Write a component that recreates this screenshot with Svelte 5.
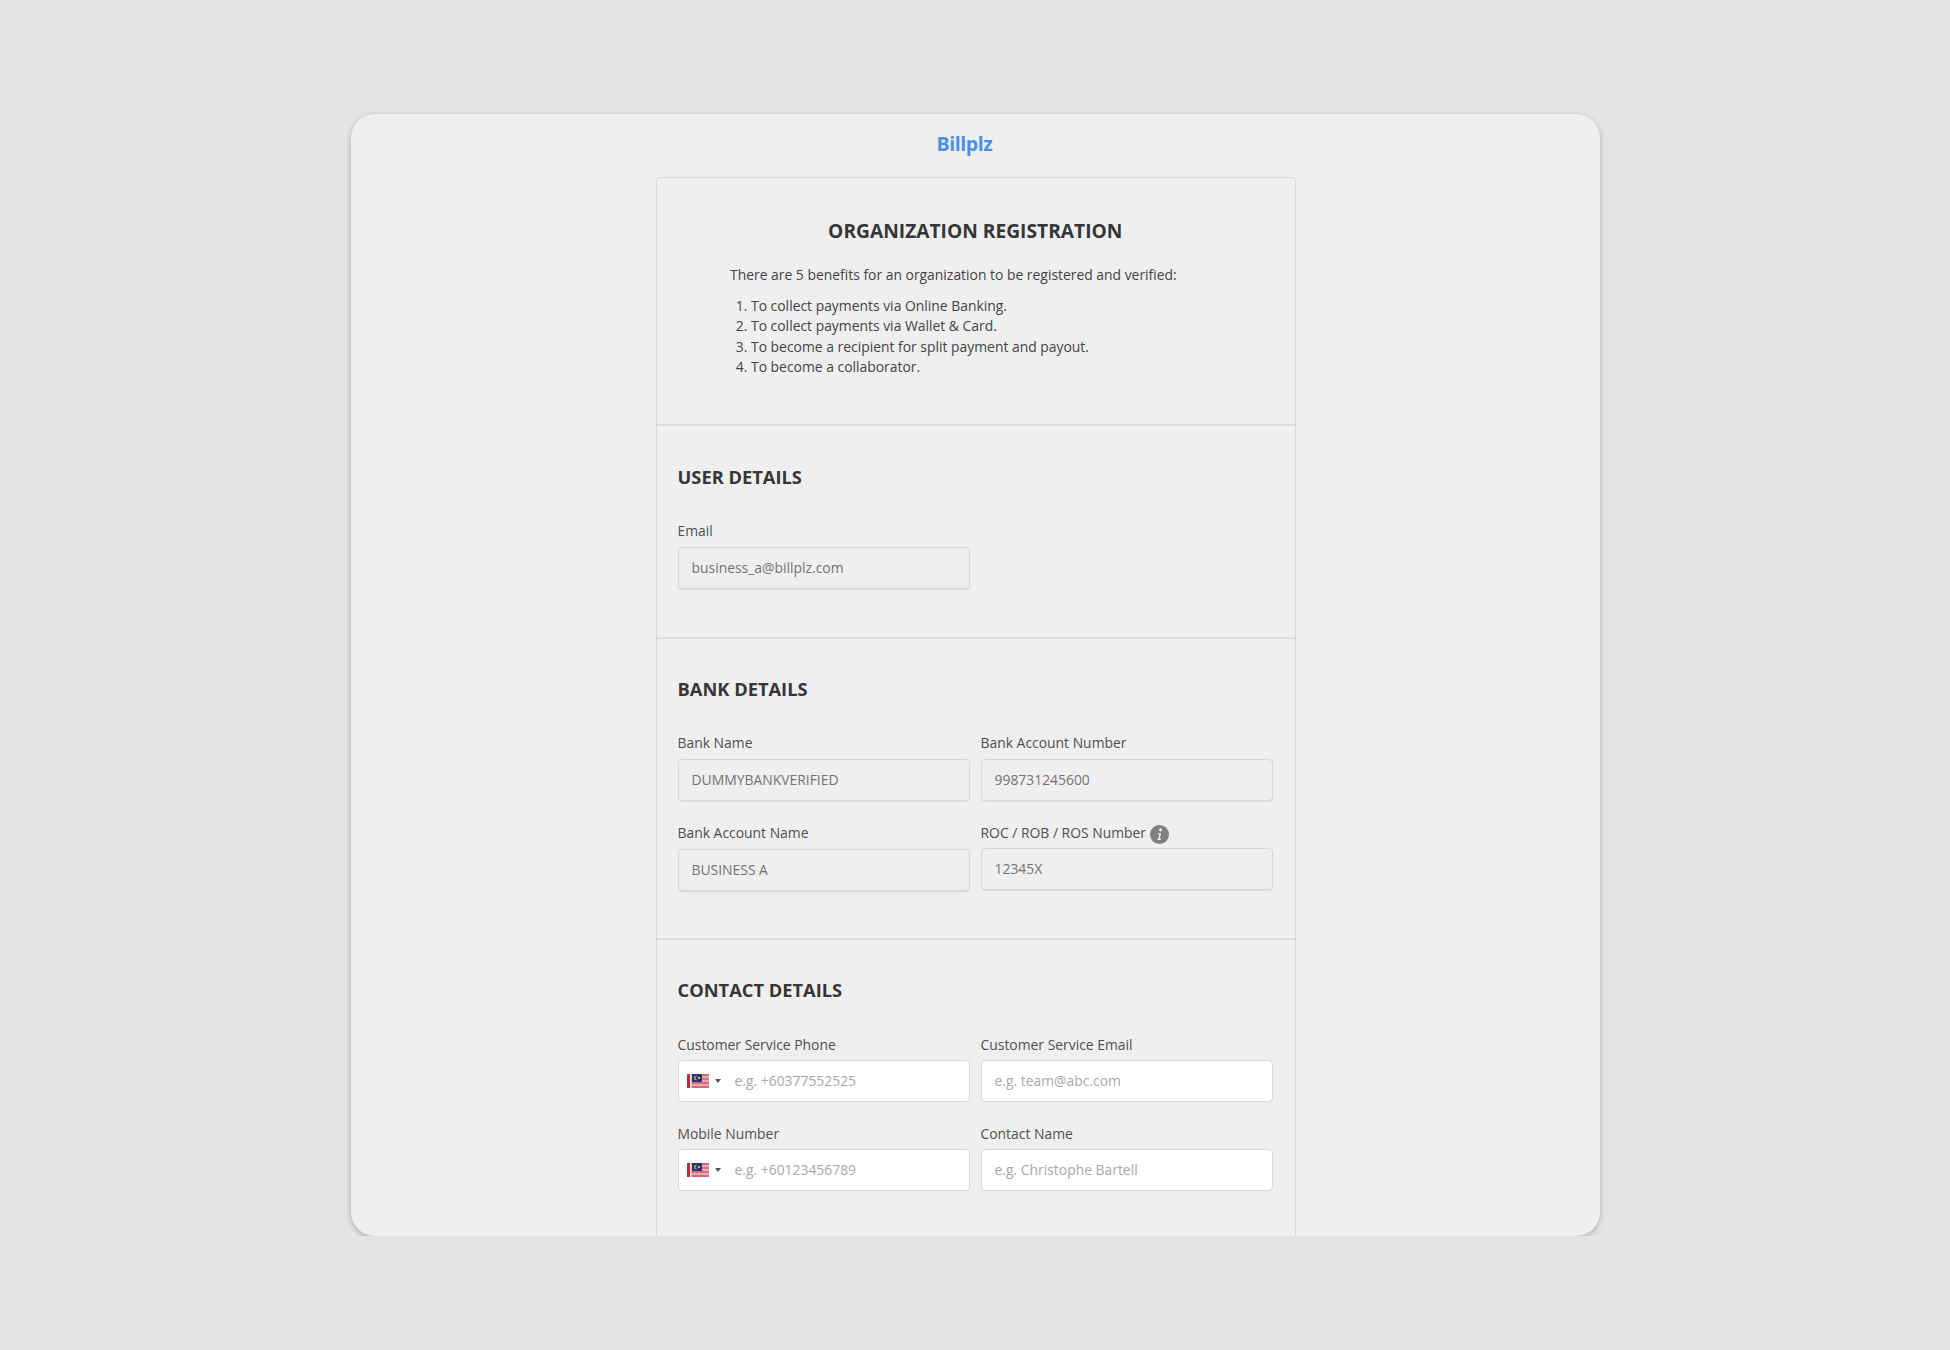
<script>
    const benefits = [
        "To collect payments via Online Banking.",
        "To collect payments via Wallet & Card.",
        "To become a recipient for split payment and payout.",
        "To become a collaborator."
    ]
</script>

{#snippet flag()}
    <svg class="flag" viewBox="0 0 22 14" aria-hidden="true">
        <rect width="22" height="14" fill="#e9a9b6" />
        <rect y="0" width="22" height="2" fill="#d9687f" />
        <rect y="4" width="22" height="2" fill="#dc7389" />
        <rect y="8" width="22" height="2" fill="#d9687f" />
        <rect y="12" width="22" height="2" fill="#d9687f" />
        <rect width="3" height="14" fill="#c8283f" />
        <rect x="3" width="1.5" height="14" fill="#f3e4e6" />
        <rect x="5" y="0" width="10" height="8" fill="#2d3570" />
        <circle cx="9.4" cy="4" r="2.2" fill="#e6cb6a" />
        <circle cx="10.2" cy="4" r="1.9" fill="#2d3570" />
        <circle cx="12" cy="4" r="1.1" fill="#e6cb6a" />
    </svg>
    <span class="caret"></span>
{/snippet}

<div class="window">
    <header class="logo">Billplz</header>

    <main class="card">
        <section class="intro">
            <h1>ORGANIZATION REGISTRATION</h1>
            <p>There are 5 benefits for an organization to be registered and verified:</p>
            <ol>
                {#each benefits as item}
                    <li>{item}</li>
                {/each}
            </ol>
        </section>

        <section class="user">
            <h2>USER DETAILS</h2>
            <div class="grid">
                <label class="field">
                    <span class="label">Email</span>
                    <input class="input" disabled value="business_a@billplz.com" />
                </label>
            </div>
        </section>

        <section class="bank">
            <h2>BANK DETAILS</h2>
            <div class="grid">
                <label class="field">
                    <span class="label">Bank Name</span>
                    <input class="input" disabled value="DUMMYBANKVERIFIED" />
                </label>
                <label class="field">
                    <span class="label">Bank Account Number</span>
                    <input class="input" disabled value="998731245600" />
                </label>
                <label class="field">
                    <span class="label">Bank Account Name</span>
                    <input class="input" disabled value="BUSINESS A" />
                </label>
                <label class="field">
                    <span class="label with-info">
                        ROC / ROB / ROS Number
                        <svg class="info" viewBox="0 0 18 18" aria-hidden="true">
                            <circle cx="9" cy="9" r="9" fill="#808080" />
                            <circle cx="10" cy="4.6" r="1.5" fill="#efefef" />
                            <path d="M7.2 7.7h3.3l-1.2 5.2h1.1l-.3 1.2H6.9l.3-1.2h.8l.9-4h-1z" fill="#efefef" />
                        </svg>
                    </span>
                    <input class="input" disabled value="12345X" />
                </label>
            </div>
        </section>

        <section class="contact">
            <h2>CONTACT DETAILS</h2>
            <div class="grid">
                <div class="field">
                    <span class="label">Customer Service Phone</span>
                    <div class="input phone">
                        {@render flag()}
                        <input placeholder="e.g. +60377552525" />
                    </div>
                </div>
                <label class="field">
                    <span class="label">Customer Service Email</span>
                    <input class="input white" placeholder="e.g. team@abc.com" />
                </label>
                <div class="field">
                    <span class="label">Mobile Number</span>
                    <div class="input phone">
                        {@render flag()}
                        <input placeholder="e.g. +60123456789" />
                    </div>
                </div>
                <label class="field">
                    <span class="label">Contact Name</span>
                    <input class="input white" placeholder="e.g. Christophe Bartell" />
                </label>
            </div>
        </section>
    </main>
</div>

<style>
    :global(body) {
        background-color: #e4e4e4;
        font-family: "Open Sans", "Noto Sans", sans-serif;
        color: #444444;
    }

    .window {
        box-sizing: border-box;
        width: 1249px;
        height: 1122px;
        margin: 114px 0 0 351px;
        display: flex;
        flex-direction: column;
        align-items: center;
        overflow: hidden;

        border-radius: 24px;
        background-color: #efefef;
        box-shadow: 0 2px 5px 1px rgba(0, 0, 0, 0.18);
    }

    .logo {
        height: 63px;
        padding: 16px 22px 0 0;
        box-sizing: border-box;
        flex: none;

        font-size: 19.5px;
        line-height: 28px;
        font-weight: 700;
        letter-spacing: -0.4px;
        color: #4a90e8;
    }

    .card {
        box-sizing: border-box;
        flex: none;
        width: 640px;

        border: solid #d8d8d8;
        border-width: 1px 1px 0;
        border-radius: 4px 4px 0 0;
    }

    section {
        padding: 39px 21px 48px;
        border-bottom: 2px solid #dddddd;
    }

    section:last-child {
        border-bottom: none;
    }

    .intro {
        height: 248px;
        box-sizing: border-box;
        padding: 40px 74px 0 73.5px;
    }

    .bank {
        padding-top: 38px;
        padding-bottom: 47px;
    }

    .contact {
        padding-top: 38px;
    }

    h1 {
        margin: 0 0 21px;
        font-size: 19.2px;
        line-height: 26px;
        font-weight: 700;
        text-align: center;
        color: #363636;
    }

    p {
        margin: 0 0 11px;
        font-size: 13.9px;
        line-height: 20px;
        white-space: nowrap;
    }

    ol {
        margin: 0;
        padding: 0 0 0 21px;
        font-size: 13.9px;
        line-height: 20.4px;
    }

    h2 {
        margin: 0 0 32px;
        font-size: 18.3px;
        line-height: 24px;
        font-weight: 700;
        color: #363636;
    }

    .contact h2 {
        margin-bottom: 33px;
    }

    .grid {
        display: grid;
        grid-template-columns: 292px 292px;
        column-gap: 11px;
        row-gap: 22px;
    }

    .field {
        display: flex;
        flex-direction: column;
    }

    .label {
        display: flex;
        align-items: center;
        gap: 4px;
        height: 20px;
        margin-bottom: 6px;
        font-size: 13.9px;
        line-height: 20px;
        color: #4f4f4f;
    }

    .contact .label,
    .with-info {
        margin-bottom: 5px;
    }

    .info {
        width: 19px;
        height: 19px;
        margin-top: 3px;
    }

    .input {
        box-sizing: border-box;
        width: 292px;
        height: 42px;
        padding: 0 13px 2px;

        font-family: inherit;
        font-size: 13.9px;
        color: #737373;

        background-color: #efefef;
        border: 1px solid #d8d8d8;
        border-radius: 4px;
        box-shadow: 0 1px 1px rgba(0, 0, 0, 0.07);
        outline: none;
    }

    .input:disabled {
        opacity: 1;
        -webkit-text-fill-color: #737373;
    }

    .white,
    .phone {
        background-color: #ffffff;
        box-shadow: none;
    }

    .input::placeholder,
    .phone input::placeholder {
        color: #a8a8a8;
        opacity: 1;
    }

    .phone {
        display: flex;
        align-items: center;
        padding: 0 0 0 8px;
    }

    .phone input {
        flex: 1;
        min-width: 0;
        padding: 0 0 2px;
        margin-left: 14px;
        border: none;
        outline: none;
        background: none;
        font-family: inherit;
        font-size: 13.9px;
    }

    .flag {
        width: 22px;
        height: 14px;
        flex: none;
        filter: blur(0.4px);
    }

    .caret {
        width: 0;
        height: 0;
        margin-left: 6px;
        border: solid transparent;
        border-width: 4px 3px 0;
        border-top-color: #555555;
    }
</style>
